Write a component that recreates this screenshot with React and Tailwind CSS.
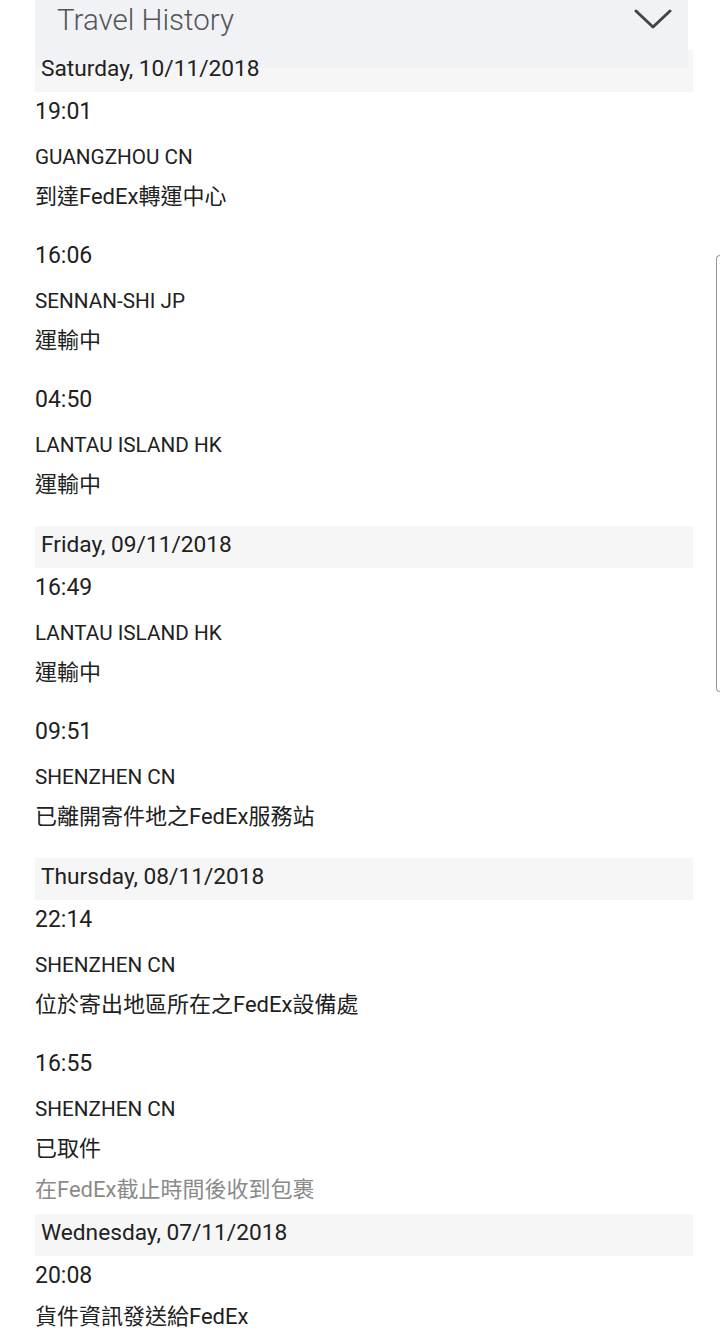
import React from 'react';

const history = [
  {
    date: 'Saturday, 10/11/2018',
    events: [
      { time: '19:01', place: 'GUANGZHOU CN', status: '到達FedEx轉運中心' },
      { time: '16:06', place: 'SENNAN-SHI JP', status: '運輸中' },
      { time: '04:50', place: 'LANTAU ISLAND HK', status: '運輸中' },
    ],
  },
  {
    date: 'Friday, 09/11/2018',
    events: [
      { time: '16:49', place: 'LANTAU ISLAND HK', status: '運輸中' },
      { time: '09:51', place: 'SHENZHEN CN', status: '已離開寄件地之FedEx服務站' },
    ],
  },
  {
    date: 'Thursday, 08/11/2018',
    events: [
      { time: '22:14', place: 'SHENZHEN CN', status: '位於寄出地區所在之FedEx設備處' },
      { time: '16:55', place: 'SHENZHEN CN', status: '已取件', note: '在FedEx截止時間後收到包裹' },
    ],
  },
  {
    date: 'Wednesday, 07/11/2018',
    events: [{ time: '20:08', status: '貨件資訊發送給FedEx' }],
  },
];

const font = { fontFamily: 'Roboto, "Noto Sans CJK TC", sans-serif' };

const Event = ({ event }) => (
  <div className={event.note ? 'pb-[2px]' : 'pb-[20px]'}>
    <div className="h-[38px] pt-[3px] flex items-center text-[23px] text-[#212121]">{event.time}</div>
    {event.place && (
      <div className="mt-[6px] h-[40px] pt-[3px] flex items-center text-[20.7px] text-[#212121]">{event.place}</div>
    )}
    <div className={`${event.place ? '' : 'mt-[2px]'} h-[40px] flex items-center text-[22px] text-[#212121]`}>
      {event.status}
    </div>
    {event.note && (
      <div className="h-[42px] flex items-center text-[22px] text-[#8a8a8a]">{event.note}</div>
    )}
  </div>
);

const App = () => {
  return (
    <div className="relative min-h-[1338px] bg-white overflow-hidden" style={font}>
      <div className="pl-[35px] pr-[27px]">
        {/* collapsible header */}
        <div className="relative h-[68px] -mb-[20px] w-[653px] bg-[#f1f2f6] flex items-start justify-between pl-[22px] pr-[16px]">
          <span className="mt-[2px] text-[29.5px] font-light text-[#555555] leading-[36px]">Travel History</span>
          <svg width="38" height="24" viewBox="0 0 38 24" className="mt-[8px]" fill="none">
            <path d="M2 3 L19 19 L36 3" stroke="#444444" strokeWidth="3" strokeLinecap="round" strokeLinejoin="round" />
          </svg>
        </div>

        {history.map((day) => (
          <div key={day.date}>
            <div className="mt-[2px] h-[42px] bg-[#f6f6f6] flex items-center pl-[6px] pb-[3px]">
              <span className="relative z-10 text-[22.7px] text-[#212121]">{day.date}</span>
            </div>
            {day.events.map((ev) => (
              <Event key={ev.time} event={ev} />
            ))}
          </div>
        ))}
      </div>

      {/* edge handle */}
      <div className="absolute right-0 top-[255px] h-[437px] w-[4px] rounded-l-[6px] border-l border-y border-[#9a9a9a]" />
    </div>
  );
};

export default App;
